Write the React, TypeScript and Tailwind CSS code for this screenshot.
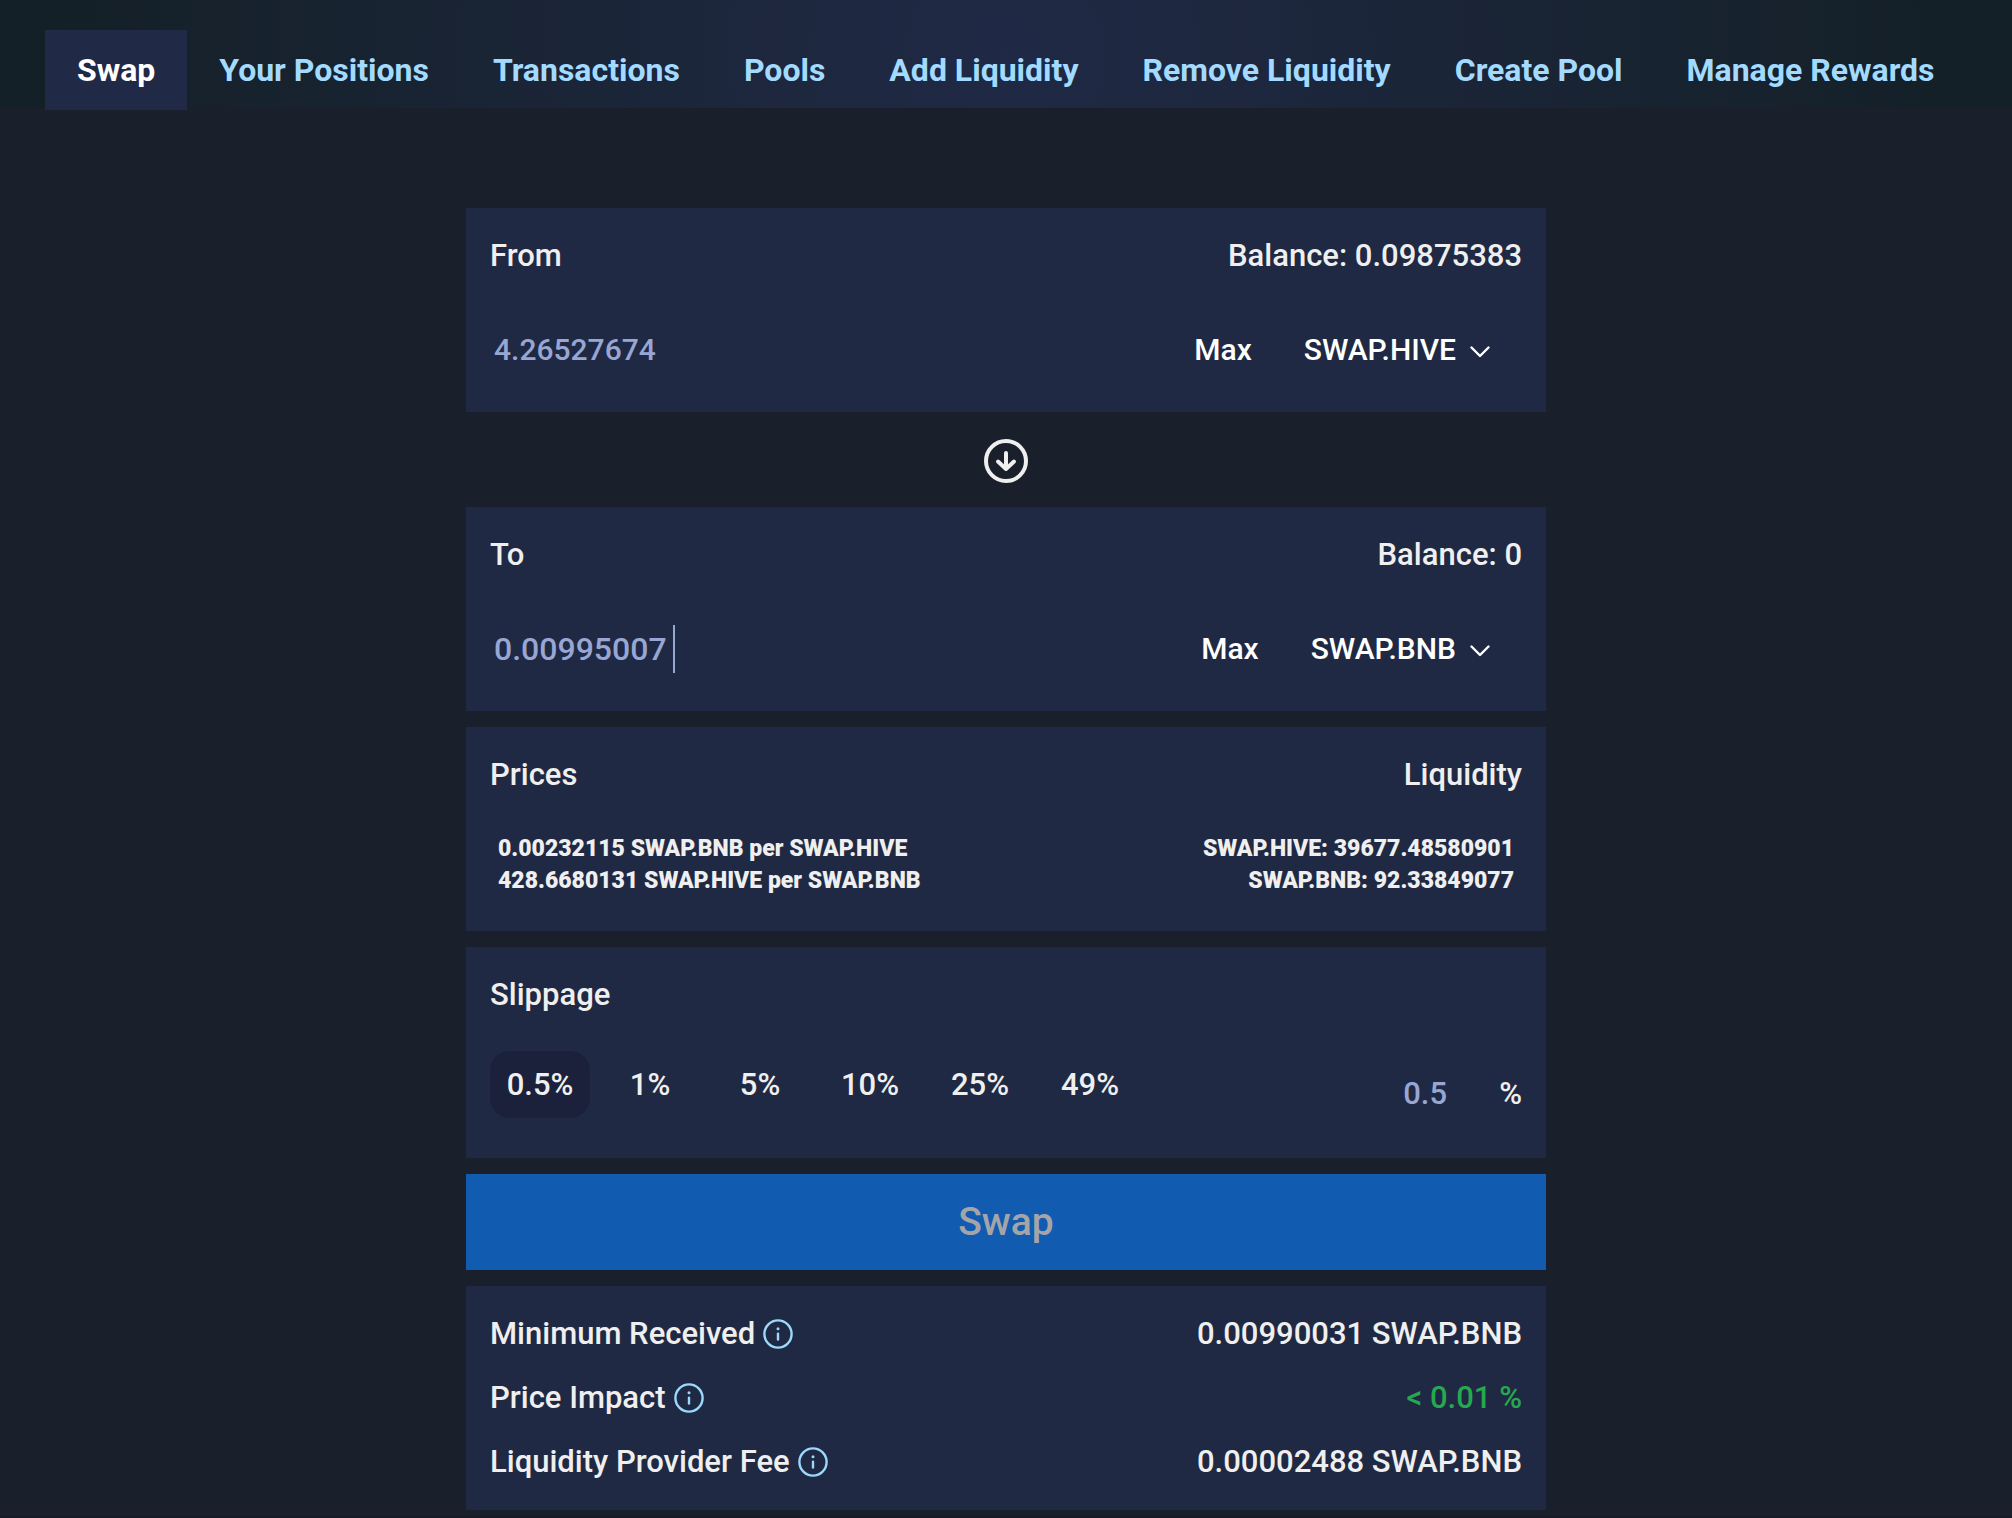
import { useState } from 'react'

const tabs = [
  'Swap',
  'Your Positions',
  'Transactions',
  'Pools',
  'Add Liquidity',
  'Remove Liquidity',
  'Create Pool',
  'Manage Rewards',
]

const tokens = ['SWAP.HIVE', 'SWAP.BNB']

const slippageOptions = ['0.5', '1', '5', '10', '25', '49']

const ArrowDownCircle = () => (
  <svg className="w-11 h-11" viewBox="0 0 44 44" fill="none" stroke="currentColor" strokeWidth="4" strokeLinecap="round" strokeLinejoin="round" aria-hidden="true">
    <circle cx="22" cy="22" r="20" />
    <path d="M22 14v16M14 22.5l8 7.5 8-7.5" />
  </svg>
)

const ChevronDown = ({ className = '' }: { className?: string }) => (
  <svg className={className} viewBox="0 0 20 12" fill="none" stroke="currentColor" strokeWidth="2.4" strokeLinecap="round" strokeLinejoin="round" aria-hidden="true">
    <path d="M1.5 1.5 10 10l8.5-8.5" />
  </svg>
)

const InfoIcon = () => (
  <svg className="w-[30px] h-[30px] text-[#9bd8fb]" viewBox="0 0 30 30" fill="none" stroke="currentColor" strokeWidth="2.4" strokeLinecap="round" aria-hidden="true">
    <circle cx="15" cy="15" r="13.6" />
    <path d="M15 14.8v5.7" />
    <circle cx="15" cy="9.8" r="1.5" fill="currentColor" stroke="none" />
  </svg>
)

interface TokenCardProps {
  label: string
  balance: string
  amount: string
  token: string
  active?: boolean
}

const TokenCard = ({ label, balance, amount, token, active = false }: TokenCardProps) => {
  const [value, setValue] = useState(amount)
  const [selected, setSelected] = useState(token)
  const id = `amount-${label.toLowerCase()}`

  return (
    <section className="flex flex-col gap-10 bg-[#202943] px-6 pt-6 pb-8">
      <div className="flex justify-between">
        <label htmlFor={id}>{label}</label>
        <span>Balance: {balance}</span>
      </div>
      <div className="flex items-center h-[60px] pl-1 text-[30px]">
        <input
          id={id}
          type="text"
          inputMode="decimal"
          value={value}
          onChange={(e) => setValue(e.target.value)}
          className={
            active
              ? 'w-[181px] h-12 bg-transparent text-[32px] text-[#97a6d3] border-r-2 border-[#97a6d3] caret-transparent outline-none'
              : 'w-[181px] h-12 bg-transparent text-[#97a6d3] outline-none'
          }
        />
        <button type="button" className="ml-auto px-6 text-white">Max</button>
        <div className="relative ml-1">
          <select
            aria-label={`${label} token`}
            value={selected}
            onChange={(e) => setSelected(e.target.value)}
            className="field-sizing-content appearance-none bg-transparent pl-6 pr-[66px] text-white outline-none"
          >
            {tokens.map((t) => (
              <option key={t} value={t}>{t}</option>
            ))}
          </select>
          <ChevronDown className="absolute right-8 top-5 w-5 h-3 text-white pointer-events-none" />
        </div>
      </div>
    </section>
  )
}

const DetailRow = ({ label, value, valueClass = '' }: { label: string; value: string; valueClass?: string }) => (
  <div className="flex justify-between">
    <dt className="flex items-center gap-2">
      {label}
      <InfoIcon />
    </dt>
    <dd className={valueClass}>{value}</dd>
  </div>
)

const App = () => {
  const [slippage, setSlippage] = useState('0.5')

  return (
    <div className="min-h-screen bg-[#1a202b] text-[#efefef] font-['Roboto',sans-serif] font-medium text-[31px] leading-[48px]">
      <header className="h-[108px] bg-[radial-gradient(circle,#202945_0%,#142027_95%)] px-[45px] pt-[30px]">
        <nav className="flex text-[32px]">
          {tabs.map((tab, idx) => (
            <a
              key={tab}
              href="#"
              className={
                idx === 0
                  ? 'bg-[#202945] px-8 py-4 font-bold text-white whitespace-nowrap'
                  : 'px-8 py-4 font-bold text-[#a3daff] whitespace-nowrap'
              }
            >
              {tab}
            </a>
          ))}
        </nav>
      </header>

      <main className="max-w-[1080px] mx-auto pt-[100px] pb-[6px]">
        <TokenCard label="From" balance="0.09875383" amount="4.26527674" token="SWAP.HIVE" />

        <div className="flex justify-center items-center h-[95px] pt-0.5">
          <button type="button" aria-label="Switch tokens">
            <ArrowDownCircle />
          </button>
        </div>

        <div className="flex flex-col gap-4">
          <TokenCard label="To" balance="0" amount="0.00995007" token="SWAP.BNB" active />

          <section className="bg-[#202943] px-6 pt-6 pb-[26px]">
            <div className="flex justify-between">
              <h2>Prices</h2>
              <h2>Liquidity</h2>
            </div>
            <div className="flex justify-between mt-[26px] p-2 font-black text-[23px] leading-8">
              <div>
                <p>0.00232115 SWAP.BNB per SWAP.HIVE</p>
                <p>428.6680131 SWAP.HIVE per SWAP.BNB</p>
              </div>
              <div className="text-right">
                <p>SWAP.HIVE: 39677.48580901</p>
                <p>SWAP.BNB: 92.33849077</p>
              </div>
            </div>
          </section>

          <section className="bg-[#202943] px-6 pt-6 pb-10">
            <h2>Slippage</h2>
            <div className="flex justify-between items-end mt-8">
              <div className="flex gap-[10px]">
                {slippageOptions.map((option) => (
                  <button
                    key={option}
                    type="button"
                    onClick={() => setSlippage(option)}
                    className={
                      option === slippage
                        ? 'w-[100px] h-[67px] rounded-[20px] bg-[#1b213a]'
                        : 'w-[100px] h-[67px] rounded-[20px]'
                    }
                  >
                    {option}%
                  </button>
                ))}
              </div>
              <div className="flex">
                <input
                  type="text"
                  inputMode="decimal"
                  aria-label="Slippage percent"
                  value={slippage}
                  onChange={(e) => setSlippage(e.target.value)}
                  className="w-24 bg-transparent text-[#97a6d3] outline-none"
                />
                <span>%</span>
              </div>
            </div>
          </section>

          <button type="button" disabled className="h-24 bg-[#115bb1] text-[#a5a5a9] text-[39px]">
            Swap
          </button>

          <dl className="flex flex-col gap-4 bg-[#202943] px-6 py-6">
            <DetailRow label="Minimum Received" value="0.00990031 SWAP.BNB" />
            <DetailRow label="Price Impact" value="< 0.01 %" valueClass="text-[#25a84f]" />
            <DetailRow label="Liquidity Provider Fee" value="0.00002488 SWAP.BNB" />
          </dl>
        </div>
      </main>

      <footer className="h-0.5 bg-[#171b28]" />
    </div>
  )
}

export default App
